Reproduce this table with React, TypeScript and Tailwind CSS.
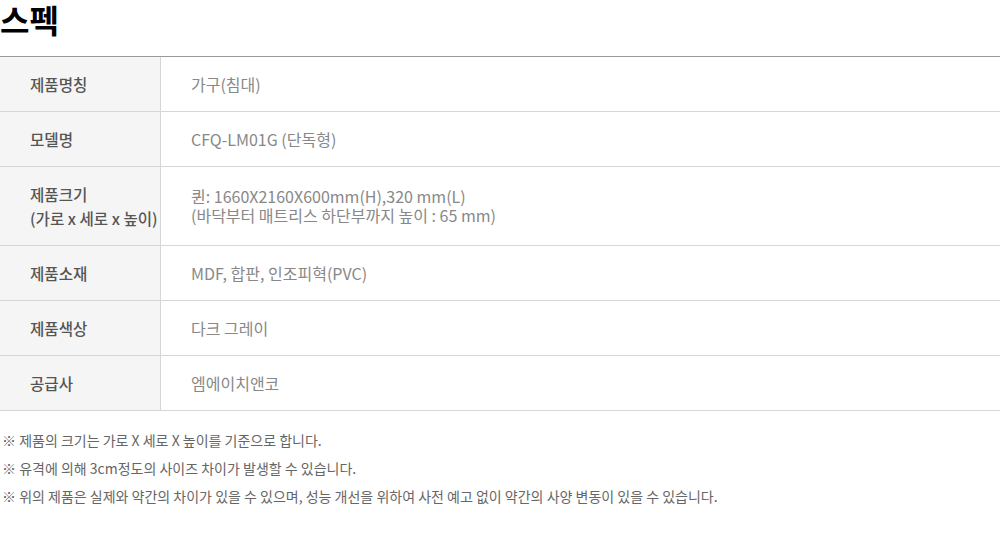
import React from "react";

const rows: { label: React.ReactNode; value: React.ReactNode; h: string }[] = [
  { label: "제품명칭", value: "가구(침대)", h: "h-[55px]" },
  { label: "모델명", value: "CFQ-LM01G (단독형)", h: "h-[55px]" },
  {
    label: (
      <>
        제품크기
        <br />
        (가로 x 세로 x 높이)
      </>
    ),
    value: (
      <>
        퀸: 1660X2160X600mm(H),320 mm(L)
        <br />
        (바닥부터 매트리스 하단부까지 높이 : 65 mm)
      </>
    ),
    h: "h-[79px]",
  },
  { label: "제품소재", value: "MDF, 합판, 인조피혁(PVC)", h: "h-[55px]" },
  { label: "제품색상", value: "다크 그레이", h: "h-[55px]" },
  { label: "공급사", value: "엠에이치앤코", h: "h-[55px]" },
];

export default function App() {
  return (
    <div
      className="w-[1000px] h-[544px] bg-white overflow-hidden"
      style={{ fontFamily: '"Noto Sans CJK KR", "Noto Sans", sans-serif' }}
    >
      <div className="h-[56px] flex items-start">
        <h1 className="text-[32px] leading-[36px] font-bold text-black mt-[1px]">스펙</h1>
      </div>
      <div className="border-t border-[#999999]">
        {rows.map((r, i) => (
          <div key={i} className={`flex border-b border-[#d6d6d6] ${r.h}`}>
            <div className="w-[161px] shrink-0 bg-[#f5f5f5] border-r border-[#d6d6d6] flex items-center pl-[30px] text-[15.6px] leading-[24px] font-medium text-[#555555]">
              <div>{r.label}</div>
            </div>
            <div className="flex items-center pl-[30px] text-[16px] leading-[19px] text-[#888888]">
              <div>{r.value}</div>
            </div>
          </div>
        ))}
      </div>
      <div className="pt-[15px] pl-[2px] text-[14px] leading-[28px] text-[#666666]">
        <p>※ 제품의 크기는 가로 X 세로 X 높이를 기준으로 합니다.</p>
        <p>※ 유격에 의해 3cm정도의 사이즈 차이가 발생할 수 있습니다.</p>
        <p>※ 위의 제품은 실제와 약간의 차이가 있을 수 있으며, 성능 개선을 위하여 사전 예고 없이 약간의 사양 변동이 있을 수 있습니다.</p>
      </div>
    </div>
  );
}
